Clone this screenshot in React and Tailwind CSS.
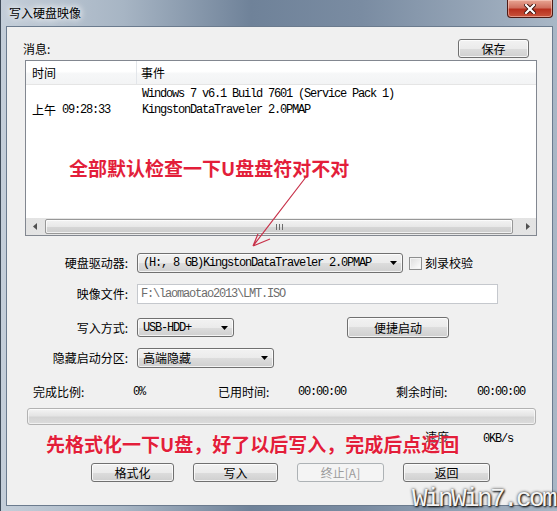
import React from "react";

const MONO = "[font-family:'Liberation_Mono','Noto_Sans_CJK_SC',monospace] text-[12px] tracking-[-1.2px]";

function Tri() {
  return (
    <svg width="7" height="4" viewBox="0 0 7 4">
      <path d="M0 0H7L3.5 4Z" fill="#000" />
    </svg>
  );
}

function Btn({ children, className = "", disabled = false }) {
  return (
    <div
      className={`flex items-center justify-center rounded-[3px] border text-[12px] leading-none ${
        disabled
          ? "border-[#adb2b5] bg-[#f4f4f4] text-[#9c9c9c]"
          : "border-[#707070] bg-[linear-gradient(#f2f2f2_0%,#ebebeb_50%,#dddddd_50%,#cfcfcf_100%)] text-black shadow-[inset_0_0_0_1px_rgba(255,255,255,0.75)]"
      } ${className}`}
    >
      {children}
    </div>
  );
}

function Combo({ children, className = "", mono = false }) {
  return (
    <div
      className={`flex items-center rounded-[3px] border border-[#707070] bg-[linear-gradient(#f2f2f2_0%,#ebebeb_50%,#dddddd_50%,#cfcfcf_100%)] shadow-[inset_0_0_0_1px_rgba(255,255,255,0.75)] pl-[5px] pr-[5px] ${className}`}
    >
      <span className={mono ? MONO : "text-[12px]"}>{children}</span>
      <span className="ml-auto flex items-center">
        <Tri />
      </span>
    </div>
  );
}

export default function App() {
  return (
    <div className="relative w-[557px] h-[511px] overflow-hidden bg-[linear-gradient(90deg,#c4ced9_0%,#a7b5c4_22%,#6f8299_45%,#7a8ca2_65%,#a9b7c6_100%)] [font-family:'Noto_Sans_CJK_SC',sans-serif] text-black border-l border-[#3f4b59]">
      {/* title bar */}
      <div className="flex h-[27px] items-start">
        <div className="pl-[8px] pt-[5px] text-[12px] leading-[16px] [text-shadow:0_0_6px_#fff,0_0_8px_#fff]">
          写入硬盘映像
        </div>
        <div className="ml-auto mr-[4px] flex h-[18px] w-[46px] items-center justify-center rounded-b-[4px] border border-t-0 border-[#4d1a14] bg-[linear-gradient(#e8a593_0%,#d0705f_45%,#b8301e_55%,#c9543c_100%)] shadow-[inset_0_0_0_1px_rgba(255,220,210,0.5)]">
          <svg width="12" height="10" viewBox="0 0 12 10">
            <path d="M2 1L10 9M10 1L2 9" stroke="#3a0e08" strokeWidth="4" strokeLinecap="square" />
            <path d="M2 1L10 9M10 1L2 9" stroke="#fff" strokeWidth="2.2" strokeLinecap="square" />
          </svg>
        </div>
      </div>

      {/* client area */}
      <div className="ml-[6px] flex h-[478px] w-[545px] flex-col bg-[#f0f0f0] shadow-[0_0_0_1px_#6b7b8e]">
        {/* 消息 row */}
        <div className="mt-[12px] flex h-[19px] items-center">
          <span className="pl-[16px] text-[12px] leading-none">消息:</span>
          <Btn className="ml-auto mr-[23px] h-[19px] w-[71px]">保存</Btn>
        </div>

        {/* list box */}
        <div className="ml-[18px] mt-[2px] flex h-[176px] w-[512px] flex-col border border-[#828790] bg-white">
          <div className="flex h-[24px] border-b border-[#e5e5e5] bg-[linear-gradient(#ffffff_0%,#ffffff_45%,#f6f7f8_55%,#f3f4f5_100%)] text-[12px]">
            <div className="flex w-[111px] items-center border-r border-[#e3e6ea] pl-[6px]">时间</div>
            <div className="flex items-center pl-[4px]">事件</div>
          </div>
          <div className="flex flex-1 pt-[1px] leading-[16px]">
            <div className="w-[111px] pl-[6px]">
              <div className="h-[16px]" />
              <div className="flex items-center">
                <span className="text-[12px]">上午</span>
                <span className={`ml-[6px] ${MONO}`}>09:28:33</span>
              </div>
            </div>
            <div className="pl-[5px]">
              <div className={MONO}>Windows 7 v6.1 Build 7601 (Service Pack 1)</div>
              <div className={MONO}>KingstonDataTraveler 2.0PMAP</div>
            </div>
          </div>
          {/* horizontal scrollbar */}
          <div className="flex h-[17px] bg-[linear-gradient(90deg,#e3e3e3,#efefef_50%,#e3e3e3)]">
            <div className="flex w-[17px] items-center justify-center">
              <svg width="4" height="7" viewBox="0 0 4 7">
                <path d="M4 0V7L0 3.5Z" fill="#505050" />
              </svg>
            </div>
            <div className="flex flex-1 items-center pl-[2px] pr-[6px]">
              <div className="flex h-[15px] flex-1 items-center justify-center rounded-[2px] border border-[#979797] bg-[linear-gradient(#f3f3f3_0%,#e8e8e8_50%,#d6d6d6_51%,#cdcdcd_100%)] shadow-[inset_0_0_0_1px_rgba(255,255,255,0.7)]">
                <div className="flex gap-[2px]">
                  <div className="h-[6px] w-[1px] bg-[#6d6d6d]" />
                  <div className="h-[6px] w-[1px] bg-[#6d6d6d]" />
                  <div className="h-[6px] w-[1px] bg-[#6d6d6d]" />
                </div>
              </div>
            </div>
            <div className="flex w-[17px] items-center justify-center">
              <svg width="4" height="7" viewBox="0 0 4 7">
                <path d="M0 0V7L4 3.5Z" fill="#505050" />
              </svg>
            </div>
          </div>
        </div>

        {/* 硬盘驱动器 */}
        <div className="mt-[17px] flex h-[20px] items-center">
          <span className="w-[121px] text-right text-[12px]">硬盘驱动器:</span>
          <Combo className="ml-[9px] h-[20px] w-[266px]" mono>
            (H:, 8 GB)KingstonDataTraveler 2.0PMAP
          </Combo>
          <div className="ml-[6px] h-[13px] w-[13px] border border-[#8e8f8f] bg-[linear-gradient(135deg,#dcdcdc,#ffffff)] shadow-[inset_0_0_0_1px_#f4f4f4]" />
          <span className="ml-[3px] text-[12px]">刻录校验</span>
        </div>

        {/* 映像文件 */}
        <div className="mt-[11px] flex h-[20px] items-center">
          <span className="w-[121px] text-right text-[12px]">映像文件:</span>
          <div className={`ml-[9px] flex h-[20px] w-[361px] items-center border border-[#c5c8cd] bg-white pl-[3px] text-[#6d6d6d] ${MONO}`}>
            F:\laomaotao2013\LMT.ISO
          </div>
        </div>

        {/* 写入方式 */}
        <div className="mt-[13px] flex h-[21px] items-center">
          <span className="w-[121px] text-right text-[12px]">写入方式:</span>
          <Combo className="ml-[9px] h-[19px] w-[97px]" mono>
            USB-HDD+
          </Combo>
          <Btn className="ml-[113px] h-[21px] w-[102px]">便捷启动</Btn>
        </div>

        {/* 隐藏启动分区 */}
        <div className="mt-[10px] flex h-[20px] items-center">
          <span className="w-[121px] text-right text-[12px]">隐藏启动分区:</span>
          <Combo className="ml-[9px] h-[20px] w-[137px]">高端隐藏</Combo>
        </div>

        {/* stats */}
        <div className="mt-[16px] flex h-[16px] items-center text-[12px]">
          <span className="ml-[26px] w-[100px]">完成比例:</span>
          <span className={`w-[85px] ${MONO}`}>0%</span>
          <span className="w-[80px]">已用时间:</span>
          <span className={`w-[98px] ${MONO}`}>00:00:00</span>
          <span className="w-[81px]">剩余时间:</span>
          <span className={MONO}>00:00:00</span>
        </div>

        {/* progress */}
        <div className="ml-[20px] mt-[8px] h-[17px] w-[509px] rounded-[3px] border border-[#b2b2b2] bg-[linear-gradient(#f4f4f4_0%,#e4e4e4_45%,#d4d4d4_55%,#dcdcdc_100%)] shadow-[inset_0_0_0_1px_rgba(255,255,255,0.6)]" />

        {/* speed */}
        <div className="mt-[4px] flex h-[16px] items-start text-[12px] leading-[16px]">
          <span className="ml-[418px] w-[58px]">速度</span>
          <span className={`mt-[2px] ${MONO}`}>0KB/s</span>
        </div>

        {/* buttons */}
        <div className="ml-[84px] mt-[18px] flex gap-[19px]">
          <Btn className="h-[19px] w-[83px]">格式化</Btn>
          <Btn className="h-[19px] w-[85px]">写入</Btn>
          <Btn className="h-[19px] w-[87px]" disabled>
            终止[A]
          </Btn>
          <Btn className="h-[19px] w-[87px]">返回</Btn>
        </div>
      </div>

      {/* annotations */}
      <div className="absolute left-[68px] top-[156px] text-[19px] font-bold leading-[24px] text-[#e31e3a] [text-shadow:0_0_2px_#fff]">
        全部默认检查一下U盘盘符对不对
      </div>
      <div className="absolute left-[45px] top-[432px] text-[19px] font-bold leading-[24px] text-[#e31e3a] [text-shadow:0_0_2px_#fff]">
        先格式化一下U盘，好了以后写入，完成后点返回
      </div>
      <svg className="pointer-events-none absolute left-0 top-0" width="557" height="511" viewBox="0 0 557 511">
        <path d="M305 177L252 246M252 246L257 234M252 246L269 239" stroke="#c8324a" strokeWidth="1.2" fill="none" />
      </svg>

      {/* watermark */}
      <div className="absolute left-[411px] top-[484px] text-[26px] leading-[30px] tracking-[-2.6px] text-[#f4f4f4] [font-family:'Liberation_Mono',monospace] [text-shadow:1px_1px_2px_#000,0_0_3px_#333]">
        WinWin7.com
      </div>
    </div>
  );
}
